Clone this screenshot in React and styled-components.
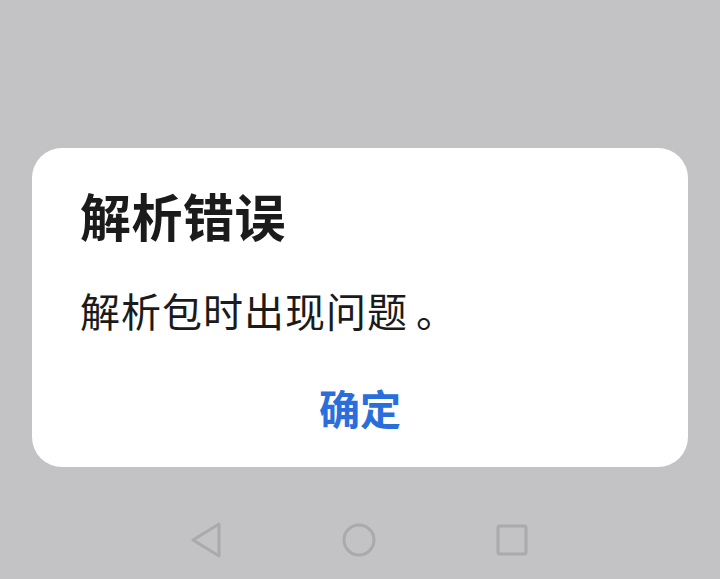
import styled, { createGlobalStyle } from "styled-components";

const GlobalStyle = createGlobalStyle`
  html, body {
    margin: 0;
    padding: 0;
    background: #c3c3c5;
  }
  body {
    font-family: "Noto Sans CJK SC", "Noto Sans", sans-serif;
  }
`;

const Screen = styled.div`
  width: 720px;
  height: 579px;
  box-sizing: border-box;
  padding: 148px 32px 0;
  display: flex;
  flex-direction: column;
  background: #c3c3c5;
  overflow: hidden;
`;

const Dialog = styled.div`
  height: 319px;
  box-sizing: border-box;
  background: #ffffff;
  border-radius: 30px;
  padding: 36px 48px 0;
  display: flex;
  flex-direction: column;
`;

const Title = styled.div`
  font-size: 51px;
  font-weight: 700;
  line-height: 62px;
  color: #1b1b1b;
  letter-spacing: 0.5px;
`;

const Message = styled.div`
  margin-top: 39px;
  font-size: 40px;
  font-weight: 400;
  line-height: 50px;
  color: #1b1b1b;
  letter-spacing: 1px;
`;

const Period = styled.span`
  margin-left: 8px;
`;

const ButtonRow = styled.div`
  margin-top: 47px;
  display: flex;
  justify-content: center;
`;

const Button = styled.div`
  font-size: 41px;
  font-weight: 700;
  line-height: 50px;
  color: #2a6edc;
`;

const NavBar = styled.div`
  margin-top: 53px;
  height: 40px;
  display: flex;
  align-items: center;
  gap: 113px;
  padding-left: 154px;
`;

const NavIcon = styled.svg`
  width: 40px;
  height: 40px;
  fill: none;
  stroke: #aaaaac;
  stroke-width: 3;
  stroke-linejoin: round;
  stroke-linecap: round;
`;

export default function App() {
  return (
    <>
      <GlobalStyle />
      <Screen>
        <Dialog>
          <Title>解析错误</Title>
          <Message>
            解析包时出现问题<Period>。</Period>
          </Message>
          <ButtonRow>
            <Button>确定</Button>
          </ButtonRow>
        </Dialog>
        <NavBar>
          <NavIcon viewBox="0 0 40 40">
            <path d="M33 4 L7 20 L33 36 Z" />
          </NavIcon>
          <NavIcon viewBox="0 0 40 40">
            <circle cx="20" cy="20" r="15" />
          </NavIcon>
          <NavIcon viewBox="0 0 40 40">
            <rect x="6" y="6" width="28" height="28" rx="2" />
          </NavIcon>
        </NavBar>
      </Screen>
    </>
  );
}
